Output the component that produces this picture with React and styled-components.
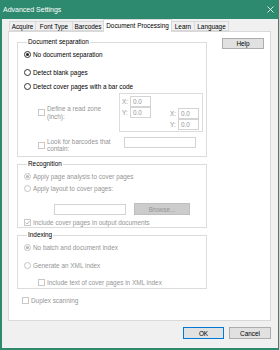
import React from "react";
import styled, { createGlobalStyle } from "styled-components";

const Global = createGlobalStyle`
  html, body { margin: 0; padding: 0; background: #f0f0f0; }
  * { box-sizing: border-box; }
`;

const TEAL = "#2e8a6f";
const GRAY = "#959595";

const Window = styled.div`
  width: 279px;
  height: 350px;
  background: #f0f0f0;
  border: 1px solid ${TEAL};
  border-top: 0;
  border-left-width: 2px;
  border-bottom-width: 2px;
  display: flex;
  flex-direction: column;
  font-family: "Liberation Sans", Arial, sans-serif;
  font-size: 6.4px;
  color: #000;
`;

const TitleBar = styled.div`
  height: 19px;
  background: ${TEAL};
  color: #fff;
  font-size: 7px;
  display: flex;
  align-items: center;
  justify-content: space-between;
  padding: 0 5px 0 3px;
  margin-left: -2px;
  margin-right: -1px;
`;

const TabStrip = styled.div`
  height: 12px;
  display: flex;
  align-items: flex-end;
  padding-left: 8px;
`;

const Tab = styled.div`
  width: ${(p) => p.$w}px;
  height: ${(p) => (p.$active ? 13 : 10)}px;
  margin-bottom: ${(p) => (p.$active ? -1 : 0)}px;
  margin-left: -1px;
  background: ${(p) => (p.$active ? "#fff" : "#f0f0f0")};
  border: 1px solid #d9d9d9;
  border-bottom: ${(p) => (p.$active ? "0" : "1px solid #d9d9d9")};
  position: relative;
  z-index: ${(p) => (p.$active ? 1 : 0)};
  display: flex;
  align-items: center;
  justify-content: center;
  white-space: nowrap;
  padding-bottom: ${(p) => (p.$active ? 2 : 0)}px;
`;

const Panel = styled.div`
  height: 290px;
  margin: 0 7px 0 6px;
  background: #fff;
  border: 1px solid #d9d9d9;
  display: flex;
  padding: 6px 0 0 8px;
`;

const Column = styled.div`
  width: 190px;
  display: flex;
  flex-direction: column;
`;

const Group = styled.fieldset`
  margin: ${(p) => p.$mt || 0}px 0 0 0;
  padding: 0 0 ${(p) => p.$pb || 0}px 6px;
  border: 1px solid #dcdcdc;
  min-width: 0;
  display: flex;
  flex-direction: column;
`;

const Legend = styled.legend`
  padding: 0 1px;
  margin-left: 3px;
  line-height: 8px;
  height: 8px;
  color: #000;
`;

const Option = styled.div`
  display: flex;
  align-items: center;
  gap: 2px;
  height: ${(p) => p.$h || 10}px;
  margin-top: ${(p) => p.$mt || 0}px;
  margin-left: ${(p) => p.$ml || 0}px;
  width: ${(p) => (p.$w ? `${p.$w}px` : "auto")};
  flex-shrink: 0;
  color: ${(p) => (p.$disabled ? GRAY : "#000")};
  white-space: nowrap;
`;

const TwoLine = styled.div`
  line-height: 7.5px;
  white-space: normal;
`;

const RadioCircle = styled.span`
  width: 7px;
  height: 7px;
  border-radius: 50%;
  border: 1px solid ${(p) => (p.$disabled ? "#c4c4c4" : "#333")};
  background: #fff;
  display: flex;
  align-items: center;
  justify-content: center;
  flex-shrink: 0;
  &::after {
    content: "";
    width: 3px;
    height: 3px;
    border-radius: 50%;
    background: ${(p) => (p.$disabled ? "#b4b4b4" : "#222")};
    display: ${(p) => (p.$checked ? "block" : "none")};
  }
`;

const CheckSquare = styled.span`
  width: 7px;
  height: 7px;
  border: 1px solid ${(p) => (p.$disabled ? "#c8c8c8" : "#333")};
  background: #fff;
  display: flex;
  align-items: center;
  justify-content: center;
  flex-shrink: 0;
`;

const Row = styled.div`
  display: flex;
  align-items: ${(p) => p.$align || "center"};
  margin-top: ${(p) => p.$mt || 0}px;
  margin-left: ${(p) => p.$ml || 0}px;
  gap: ${(p) => p.$gap || 0}px;
`;

const CoordBox = styled.div`
  width: 84px;
  height: 39px;
  border: 1px solid #dcdcdc;
  display: flex;
  padding: 2px 0 0 2px;
  gap: 19px;
`;

const CoordCol = styled.div`
  display: grid;
  grid-template-columns: 8px 21px;
  grid-auto-rows: 11px;
  align-items: center;
  margin-top: ${(p) => p.$mt || 0}px;
  color: ${GRAY};
`;

const Field = styled.div`
  width: ${(p) => p.$w}px;
  height: 11px;
  border: 1px solid #d4d4d4;
  background: #fff;
  color: ${GRAY};
  padding-left: 2px;
  line-height: 9px;
`;

const Button = styled.div`
  width: ${(p) => p.$w}px;
  height: ${(p) => p.$h || 12}px;
  background: ${(p) => (p.$disabled ? "#cccccc" : "#e1e1e1")};
  border: 1px solid ${(p) => (p.$primary ? "#0078d7" : p.$disabled ? "#bfbfbf" : "#adadad")};
  color: ${(p) => (p.$disabled ? GRAY : "#000")};
  display: flex;
  align-items: center;
  justify-content: center;
  flex-shrink: 0;
`;

const HelpWrap = styled.div`
  margin-left: 15px;
`;

const Footer = styled.div`
  display: flex;
  justify-content: flex-end;
  gap: 5px;
  padding: 6px 7px 0 0;
`;

const Radio = ({ checked, disabled, children, ...rest }) => (
  <Option $disabled={disabled} {...rest}>
    <RadioCircle $checked={checked} $disabled={disabled} />
    <span>{children}</span>
  </Option>
);

const Check = ({ checked, disabled, children, ...rest }) => (
  <Option $disabled={disabled} {...rest}>
    <CheckSquare $disabled={disabled}>
      {checked && (
        <svg width="5" height="5" viewBox="0 0 5 5">
          <path d="M0.6 2.6 L2 4 L4.5 1" fill="none" stroke="#b0b0b0" strokeWidth="0.9" />
        </svg>
      )}
    </CheckSquare>
    {children}
  </Option>
);

const tabs = [
  ["Acquire", 27],
  ["Font Type", 38],
  ["Barcodes", 32],
  ["Document Processing", 69],
  ["Learn", 24],
  ["Language", 35],
];

export default function App() {
  return (
    <>
      <Global />
      <Window>
        <TitleBar>
          <span>Advanced Settings</span>
          <svg width="7" height="7" viewBox="0 0 7 7">
            <path d="M0.5 0.5 L6.5 6.5 M6.5 0.5 L0.5 6.5" stroke="#fff" strokeWidth="0.8" />
          </svg>
        </TitleBar>
        <TabStrip>
          {tabs.map(([t, w]) => (
            <Tab key={t} $w={w} $active={t === "Document Processing"}>
              {t}
            </Tab>
          ))}
        </TabStrip>
        <Panel>
          <Column>
            <Group $pb={3}>
              <Legend>Document separation</Legend>
              <Radio checked $mt={3}>No document separation</Radio>
              <Radio $mt={8}>Detect blank pages</Radio>
              <Radio $mt={4}>Detect cover pages with a bar code</Radio>
              <Row $mt={2} $ml={14}>
                <Check disabled $w={81} $h={16}>
                  <TwoLine>
                    Define a read zone
                    <br />
                    (inch):
                  </TwoLine>
                </Check>
                <CoordBox>
                  <CoordCol>
                    <span>X:</span>
                    <Field $w={21}>0.0</Field>
                    <span>Y:</span>
                    <Field $w={21}>0.0</Field>
                  </CoordCol>
                  <CoordCol $mt={12}>
                    <span>X:</span>
                    <Field $w={21}>0.0</Field>
                    <span>Y:</span>
                    <Field $w={21}>0.0</Field>
                  </CoordCol>
                </CoordBox>
              </Row>
              <Row $mt={5} $ml={14} $align="flex-start">
                <Check disabled $w={86} $h={16}>
                  <TwoLine>
                    Look for barcodes that
                    <br />
                    contain:
                  </TwoLine>
                </Check>
                <Field $w={72} />
              </Row>
            </Group>

            <Group $mt={3} $pb={0}>
              <Legend>Recognition</Legend>
              <Radio checked disabled $mt={3}>Apply page analysis to cover pages</Radio>
              <Radio disabled $mt={2}>Apply layout to cover pages:</Radio>
              <Row $mt={10} $ml={30} $gap={8}>
                <Field $w={72} />
                <Button $w={56} $disabled>Browse...</Button>
              </Row>
              <Check checked disabled $mt={2}>
                <span>Include cover pages in output documents</span>
              </Check>
            </Group>

            <Group $mt={3} $pb={1}>
              <Legend>Indexing</Legend>
              <Radio checked disabled $mt={3}>No batch and document index</Radio>
              <Radio disabled $mt={8}>Generate an XML index</Radio>
              <Check disabled $mt={7} $ml={14}>
                <span>Include text of cover pages in XML index</span>
              </Check>
            </Group>

            <Check disabled $mt={6} $ml={5}>
              <span>Duplex scanning</span>
            </Check>
          </Column>
          <HelpWrap>
            <Button $w={42} $h={11}>Help</Button>
          </HelpWrap>
        </Panel>
        <Footer>
          <Button $w={41} $primary>OK</Button>
          <Button $w={42}>Cancel</Button>
        </Footer>
      </Window>
    </>
  );
}
